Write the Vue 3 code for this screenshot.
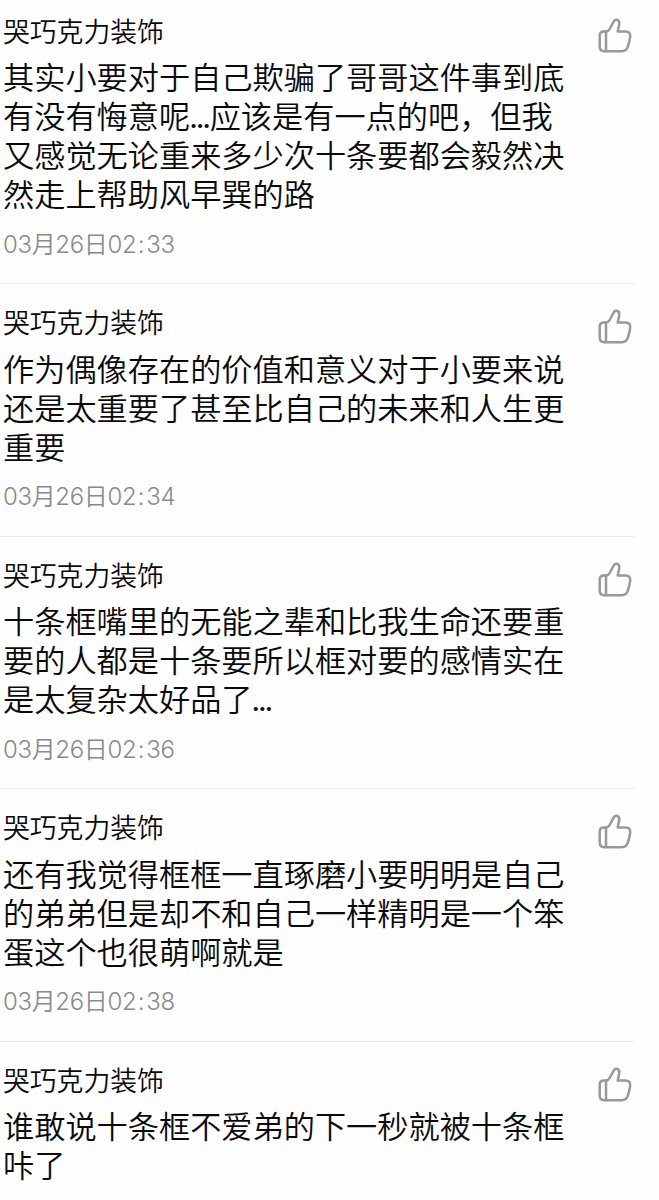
<template>
  <div class="comment-list">
    <div v-for="(item, i) in comments" :key="i" class="comment">
      <div class="main">
        <div class="name">{{ item.name }}</div>
        <div class="content">
          <p v-for="line in item.lines" :key="line" class="line">
            <span
              v-for="(part, k) in line.split(/(…)/)"
              :key="k"
              :class="{ dots: part === '…' }"
            >{{ part }}</span>
          </p>
        </div>
        <div v-if="item.date" class="time">{{ item.date }}{{ item.hour }}<span class="colon">:</span>{{ item.minute }}</div>
      </div>
      <!-- 点赞 -->
      <button class="like" aria-label="点赞">
        <svg viewBox="0 0 36 38" width="36" height="38">
          <path d="M9.4 14.4H6.9Q2.7 14.4 2.7 18.6V29.6Q2.7 34.2 7.3 34.2H24.6Q29.2 34.2 30.6 30.2Q32.8 24.6 33.2 19.4Q33.4 14.4 28.6 14.4H20.7L22.2 7.6Q22.8 3.6 19.8 2.8Q17.8 2.4 16.8 4.4L12.6 12Q11.4 14.4 9.4 14.4" />
          <path d="M9 14.6V34" />
        </svg>
      </button>
    </div>
  </div>
</template>

<script setup>
const name = '哭巧克力装饰'

const comments = [
  {
    name,
    lines: [
      '其实小要对于自己欺骗了哥哥这件事到底',
      '有没有悔意呢…应该是有一点的吧，但我',
      '又感觉无论重来多少次十条要都会毅然决',
      '然走上帮助风早巽的路'
    ],
    date: '03月26日',
    hour: '02',
    minute: '33'
  },
  {
    name,
    lines: [
      '作为偶像存在的价值和意义对于小要来说',
      '还是太重要了甚至比自己的未来和人生更',
      '重要'
    ],
    date: '03月26日',
    hour: '02',
    minute: '34'
  },
  {
    name,
    lines: [
      '十条框嘴里的无能之辈和比我生命还要重',
      '要的人都是十条要所以框对要的感情实在',
      '是太复杂太好品了…'
    ],
    date: '03月26日',
    hour: '02',
    minute: '36'
  },
  {
    name,
    lines: [
      '还有我觉得框框一直琢磨小要明明是自己',
      '的弟弟但是却不和自己一样精明是一个笨',
      '蛋这个也很萌啊就是'
    ],
    date: '03月26日',
    hour: '02',
    minute: '38'
  },
  {
    name,
    lines: [
      '谁敢说十条框不爱弟的下一秒就被十条框',
      '咔了'
    ]
  }
]
</script>

<style>
body {
  background: #fefefe;
}

#app {
  height: 1200px;
  overflow: hidden;
}
</style>

<style scoped>
.comment-list {
  width: 634px;
  margin-top: -7.5px;
  font-family: "Noto Sans CJK SC", sans-serif;
  color: #0a0a0a;
}

.comment {
  display: flex;
  justify-content: space-between;
  box-sizing: border-box;
  padding: 24px 0 24.5px 3px;
  border-bottom: 1px solid #ebebeb;
}

.comment:last-child {
  padding-bottom: 0;
  border-bottom: none;
}

.name {
  height: 32px;
  margin-top: -2px;
  line-height: 32px;
  font-size: 26.8px;
  font-weight: 350;
}

.content {
  margin-top: 12.5px;
}

.line {
  display: flex;
  height: 39px;
  margin: 0;
  line-height: 39px;
  font-family: "Liberation Sans", "Noto Sans CJK SC", sans-serif;
  font-size: 31.2px;
  font-weight: 350;
  white-space: nowrap;
}

.dots {
  width: 19.5px;
  font-family: "Open Sans", sans-serif;
  font-size: 23px;
  font-weight: 700;
  line-height: 43px;
}

.time {
  height: 28px;
  margin-top: 15.5px;
  line-height: 28px;
  font-family: Inter, "Noto Sans CJK SC", sans-serif;
  font-size: 24px;
  font-weight: 350;
  letter-spacing: -0.35px;
  color: #8a8a8a;
}

.colon {
  margin: 0 2px 0 1.5px;
}

.like {
  width: 36px;
  height: 38px;
  margin: 0 1px 0 0;
  padding: 0;
  border: none;
  background: none;
}

.like svg {
  display: block;
  fill: none;
  stroke: #999;
  stroke-width: 2.5;
  stroke-linecap: round;
  stroke-linejoin: round;
}
</style>
